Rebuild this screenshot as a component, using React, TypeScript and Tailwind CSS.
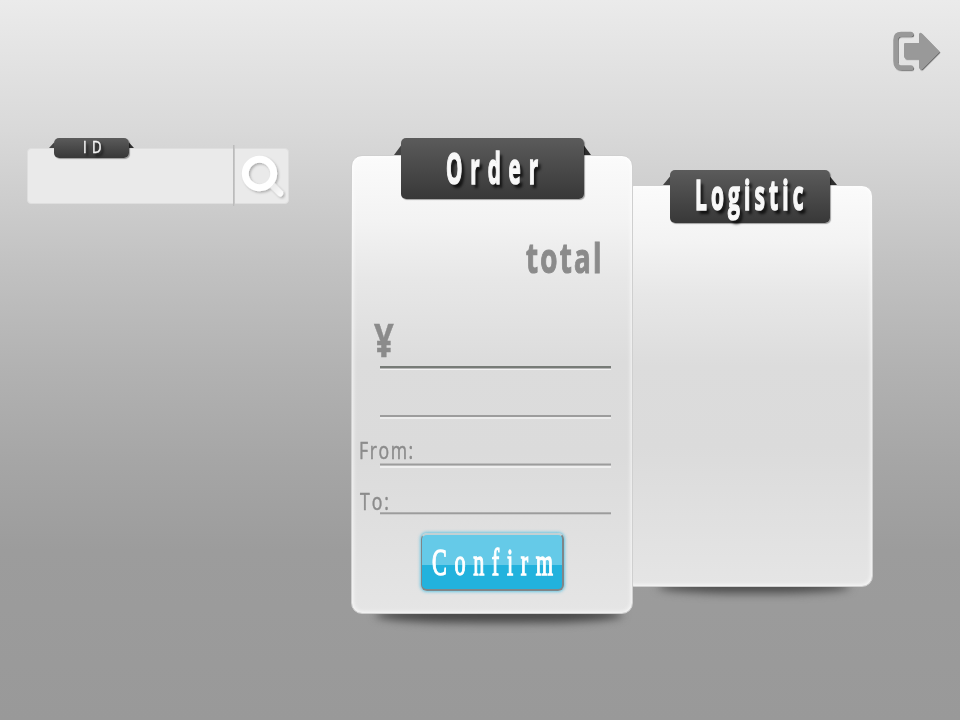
import React from "react";

const sans = "font-['Open_Sans','Noto_Sans',sans-serif]";

function Ribbon({ className, ear, children }: { className: string; ear: string; children: React.ReactNode }) {
  return (
    <div className={`absolute ${className}`}>
      <svg className={`absolute right-full top-0 ${ear}`} viewBox="0 0 6 16" preserveAspectRatio="none">
        <path d="M6 7 V16 H0 Z" fill="#444" />
      </svg>
      <svg className={`absolute left-full top-0 ${ear}`} viewBox="0 0 6 16" preserveAspectRatio="none">
        <path d="M0 7 V16 H6 Z" fill="#2e2e2e" />
      </svg>
      <div className="relative h-full w-full rounded-[5px] bg-linear-to-b from-[#5b5b5b] to-[#383838] shadow-[1px_1px_1px_rgba(0,0,0,0.35)]">
        {children}
      </div>
    </div>
  );
}

function SearchBox() {
  return (
    <section className="relative mt-[148px] ml-[27px] flex h-[56px] w-[262px] shrink-0 rounded-[4px] border border-[#dedede] bg-[#eaeaea]">
      <div className="w-[205px]" />
      <div className="-mt-[4px] h-[61px] w-[2px] bg-linear-to-r from-[#b5b5b5] to-[#cecece]" />
      <svg className="mt-[5px] ml-[5px] h-[46px] w-[46px]" viewBox="240 154 46 46">
        <defs>
          <filter id="lensShadow" x="-20%" y="-20%" width="150%" height="150%">
            <feDropShadow dx="1.5" dy="1.5" stdDeviation="1" floodColor="#000" floodOpacity="0.26" />
          </filter>
          <linearGradient id="handle" x1="0" y1="0" x2="1" y2="1">
            <stop offset="0" stopColor="#e4e4e4" />
            <stop offset="1" stopColor="#fff" />
          </linearGradient>
        </defs>
        <g filter="url(#lensShadow)">
          <path d="M270 187.5 L274.5 183 L283 191.5 Q284 194 282 196 Q280 197.5 278 195.5 Z" fill="url(#handle)" />
          <circle cx="259.5" cy="173.5" r="14.2" fill="none" stroke="#fff" strokeWidth="6.9" />
        </g>
      </svg>
      <Ribbon className="-top-[11px] left-[26px] h-[20px] w-[75px]" ear="h-[10px] w-[5px]">
        <span className={`ml-[29px] block origin-left scale-x-[0.82] pt-[1px] text-[16px] leading-none tracking-[6.5px] whitespace-nowrap text-[#f5f5f5] [-webkit-text-stroke:0.4px_#f5f5f5] [text-shadow:3px_3px_3px_rgba(0,0,0,0.8)] ${sans}`}>ID</span>
      </Ribbon>
    </section>
  );
}

const cardFace =
  "rounded-[11px] border border-[#cfcfcf] bg-[linear-gradient(#fbfbfb_0%,#f3f3f3_14%,#e7e7e7_27%,#dcdcdc_45%,#dbdbdb_65%,#e5e5e5_100%)] shadow-[inset_0_0_4px_1px_rgba(255,255,255,0.8)]";

function Rule({ className }: { className: string }) {
  return <div className={`ml-[28px] w-[231px] shrink-0 ${className}`} />;
}

function OrderCard() {
  return (
    <section className="relative z-10 mt-[155px] ml-[62px] h-[459px] w-[282px] shrink-0">
      <div className="absolute bottom-[-9px] left-[24px] h-[16px] w-[248px] rounded-[50%/60%] bg-[#484848] blur-[4px]" />
      <div className={`relative flex h-full w-full flex-col ${cardFace}`}>
        <span className={`mt-[80px] ml-[174px] block h-[42px] origin-left scale-x-[0.66] text-[42px] leading-none font-bold tracking-[3.4px] whitespace-nowrap text-[#8b8b8b] [-webkit-text-stroke:1.2px_#8b8b8b] ${sans}`}>total</span>
        <span className={`mt-[38px] ml-[22px] block h-[46px] w-[26px] origin-left scale-x-[0.75] text-[46px] leading-none font-bold text-[#8b8b8b] [-webkit-text-stroke:0.5px_#8b8b8b] ${sans}`}>¥</span>
        <Rule className="mt-[4px] h-[4px] bg-[linear-gradient(#777b77_0_50%,#b5b5b5_50%_75%,#f3f3f3_75%)]" />
        <Rule className="mt-[45px] h-[4px] bg-[linear-gradient(#9c9c9c_0_50%,#ececec_50%)]" />
        <span className={`mt-[19px] ml-[7px] block h-[24px] origin-left scale-x-[0.72] text-[24.5px] leading-[24px] tracking-[2.2px] whitespace-nowrap text-[#8b8b8b] [-webkit-text-stroke:0.5px_#8b8b8b] ${sans}`}>From:</span>
        <Rule className="mt-[1px] h-[5px] bg-[linear-gradient(#bdbdbd_0_20%,#9c9c9c_20%_40%,#bdbdbd_40%_60%,#efefef_60%)]" />
        <span className={`mt-[21px] ml-[8px] block h-[24px] origin-left scale-x-[0.72] text-[24.5px] leading-[24px] tracking-[2.8px] whitespace-nowrap text-[#8b8b8b] [-webkit-text-stroke:0.5px_#8b8b8b] ${sans}`}>To:</span>
        <Rule className="-mt-px h-[3px] bg-[linear-gradient(#b0b0b0_0_34%,#9c9c9c_34%_67%,#cccccc_67%)]" />
        <button className="mt-[18px] ml-[69px] h-[58px] w-[143px] rounded-[6px] border-2 border-t-2 border-l border-[#7f8588] border-t-[#c3d0d3] bg-[linear-gradient(#65cae8_0_55%,#22b2dd_55%)] text-left shadow-[0_0_3px_1px_rgba(70,190,225,0.75)]">
          <span className="ml-[10px] block origin-left scale-x-[0.6] pt-[1px] font-['Liberation_Serif',serif] text-[37px] leading-none tracking-[12.7px] whitespace-nowrap text-white [-webkit-text-stroke:1.3px_#fff]">Confirm</span>
        </button>
      </div>
      <Ribbon className="-top-[17px] left-[50px] h-[61px] w-[183px]" ear="h-[17px] w-[7px]">
        <span className={`ml-[45px] block origin-left scale-x-[0.48] pt-[8px] text-[43px] leading-none font-bold tracking-[16.5px] whitespace-nowrap text-[#f8f8f8] [-webkit-text-stroke:1.6px_#f8f8f8] [text-shadow:6px_4px_4px_rgba(0,0,0,0.75)] ${sans}`}>Order</span>
      </Ribbon>
    </section>
  );
}

function LogisticCard() {
  return (
    <section className="relative mt-[185px] -ml-[10px] h-[402px] w-[250px] shrink-0">
      <div className="absolute bottom-[-6px] left-[35px] h-[14px] w-[192px] rounded-[50%/60%] bg-[#484848] blur-[5px]" />
      <div className={`relative h-full w-full ${cardFace}`} />
      <Ribbon className="-top-[15px] left-[47px] h-[53px] w-[160px]" ear="h-[15px] w-[7px]">
        <span className={`ml-[25px] block origin-left scale-x-[0.5] pt-[3px] text-[42px] leading-none font-bold tracking-[8.2px] whitespace-nowrap text-[#f8f8f8] [-webkit-text-stroke:1.6px_#f8f8f8] [text-shadow:6px_4px_4px_rgba(0,0,0,0.75)] ${sans}`}>Logistic</span>
      </Ribbon>
    </section>
  );
}

function ExitIcon() {
  return (
    <svg className="mt-[30px] ml-[18px] h-[44px] w-[52px] shrink-0" viewBox="891 30 52 44">
      <defs>
        <filter id="exitShadow" x="-20%" y="-20%" width="150%" height="150%">
          <feDropShadow dx="1" dy="1.2" stdDeviation="0.7" floodColor="#000" floodOpacity="0.5" />
        </filter>
      </defs>
      <g filter="url(#exitShadow)">
        <path d="M911 34 H901 Q895.5 34 895.5 40 V61 Q895.5 67.5 901 67.5 H911" fill="none" stroke="#999" strokeWidth="4.5" strokeLinecap="round" />
        <path d="M904.5 43 H919 V34 Q920 32 922 33.5 L939.5 51.5 L922 69 Q920 70 919 68 V58.5 H906 Q904 58.5 904 56.5 V44 Z" fill="#999" />
      </g>
    </svg>
  );
}

export default function App() {
  return (
    <main className="flex h-[720px] w-[960px] items-start overflow-hidden bg-[linear-gradient(#ebebeb_0px,#d9d9d9_130px,#c0c0c0_275px,#b2b2b2_367px,#a6a6a6_459px,#9c9c9c_551px,#999999_720px)]">
      <SearchBox />
      <OrderCard />
      <LogisticCard />
      <ExitIcon />
    </main>
  );
}
